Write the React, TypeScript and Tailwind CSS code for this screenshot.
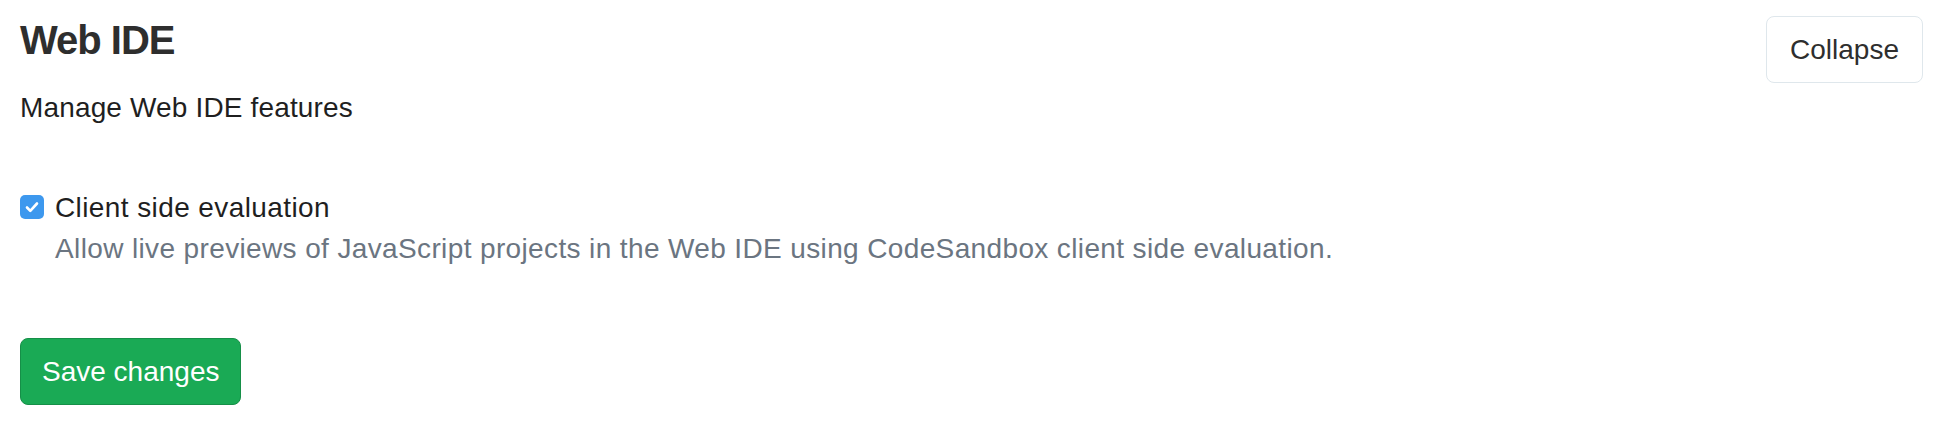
import React from 'react';

const App: React.FC = () => {
  return (
    <div className="min-h-[424px] w-full bg-white pl-[20px] pr-[17px] font-['Liberation_Sans',Arial,sans-serif] text-[#2e2e2e]">
      <div className="flex items-start justify-between">
        <div>
          <h4 className="pt-[16px] text-[40px] font-bold leading-[48px] tracking-[-1px] text-[#2e2e2e]">Web IDE</h4>
          <p className="mt-[24px] text-[28px] leading-[40px] tracking-[0.15px] text-[#1f1f1f]">Manage Web IDE features</p>
        </div>
        <button className="mt-[16px] h-[67px] rounded-[8px] border border-[#dfe7ec] bg-white px-[23px] text-[28px] leading-[40px] text-[#2e2e2e]">
          Collapse
        </button>
      </div>

      <div className="mt-[60px] flex items-start gap-[11px]">
        <div className="mt-[7px] flex h-[24px] w-[24px] items-center justify-center rounded-[5px] bg-[#3d98ee]">
          <svg width="18" height="18" viewBox="0 0 18 18" fill="none">
            <path d="M4 9.5l3.3 3.3L14 5.5" stroke="white" strokeWidth="2.6" strokeLinecap="round" strokeLinejoin="round" />
          </svg>
        </div>
        <div>
          <label className="block text-[28px] leading-[40px] tracking-[0.4px] text-[#1f1f1f]">Client side evaluation</label>
          <p className="mt-px text-[28px] leading-[40px] tracking-[0.37px] text-[#6b7581]">
            Allow live previews of JavaScript projects in the Web IDE using CodeSandbox client side evaluation.
          </p>
        </div>
      </div>

      <button className="mt-[69px] h-[67px] rounded-[8px] border border-[#168f48] bg-[#1aaa55] px-[21px] text-[28px] leading-[40px] text-white">
        Save changes
      </button>
    </div>
  );
};

export default App;
